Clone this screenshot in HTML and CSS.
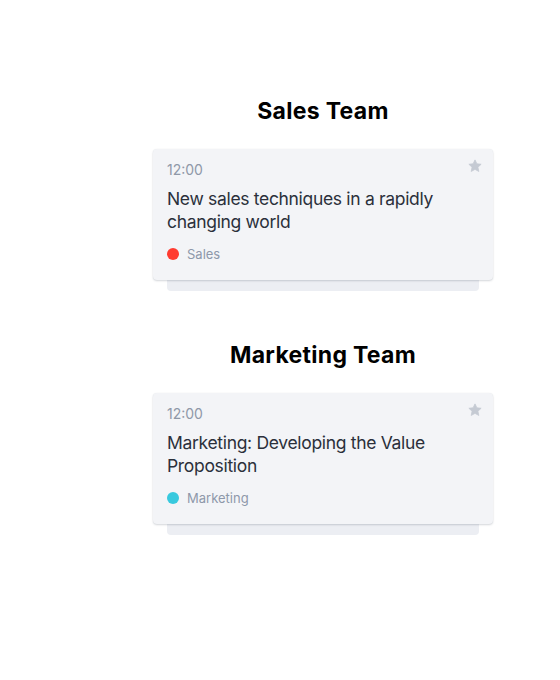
FILE: index.html
```html
<!DOCTYPE html>
<html lang="en">
<head>
<meta charset="utf-8">
<title>Teams</title>
<link rel="stylesheet" href="styles.css">
</head>
<body>
<main class="page">
  <section class="team">
    <h2 class="team-title">Sales Team</h2>
    <article class="card">
      <div class="card-top">
        <span class="time">12:00</span>
        <svg class="star" viewBox="0 0 24 24" width="16" height="16" aria-hidden="true"><path d="M12 2.8l2.8 5.9 6.4.7-4.8 4.4 1.3 6.4L12 17l-5.7 3.2 1.3-6.4-4.8-4.4 6.4-.7z"/></svg>
      </div>
      <h3 class="card-title">New sales techniques in a rapidly changing world</h3>
      <div class="tag"><span class="dot dot-red"></span><span class="tag-label">Sales</span></div>
    </article>
    <div class="card-stack"></div>
  </section>
  <section class="team">
    <h2 class="team-title">Marketing Team</h2>
    <article class="card">
      <div class="card-top">
        <span class="time">12:00</span>
        <svg class="star" viewBox="0 0 24 24" width="16" height="16" aria-hidden="true"><path d="M12 2.8l2.8 5.9 6.4.7-4.8 4.4 1.3 6.4L12 17l-5.7 3.2 1.3-6.4-4.8-4.4 6.4-.7z"/></svg>
      </div>
      <h3 class="card-title">Marketing: Developing the Value Proposition</h3>
      <div class="tag"><span class="dot dot-cyan"></span><span class="tag-label">Marketing</span></div>
    </article>
    <div class="card-stack"></div>
  </section>
</main>
</body>
</html>
```
FILE: styles.css
```css
* { box-sizing: border-box; }
html, body { margin: 0; padding: 0; background: #ffffff; }
body { font-family: Inter, "Noto Sans", sans-serif; }

.page {
  padding: 97px 0 0 153px;
  width: 493px;
  display: flex;
  flex-direction: column;
  gap: 50px;
}

.team { display: flex; flex-direction: column; }

.team-title {
  margin: 0 0 24px;
  font-size: 23px;
  line-height: 28px;
  font-weight: 700;
  color: #000;
  text-align: center;
  letter-spacing: 0.3px;
}

.card {
  background: #f3f4f7;
  border-radius: 4px;
  padding: 11px 10px 16px 14px;
  box-shadow: 0 1px 2px rgba(30, 40, 60, 0.18), 0 0 1px rgba(30, 40, 60, 0.08);
  position: relative;
  z-index: 1;
}

.card-top {
  display: flex;
  justify-content: space-between;
  align-items: flex-start;
}

.time {
  font-size: 14px;
  line-height: 20px;
  color: #8f98a8;
}

.star { fill: #c5cad3; margin-top: -2px; stroke: #c5cad3; stroke-width: 1.2; stroke-linejoin: round; }

.card-title {
  margin: 6.5px 0 0;
  font-size: 17.5px;
  line-height: 23px;
  font-weight: 400;
  color: #2b303b;
  letter-spacing: -0.32px;
}

.tag {
  margin-top: 11.5px;
  display: flex;
  align-items: center;
  gap: 8px;
  height: 20px;
}

.dot { width: 12px; height: 12px; border-radius: 50%; }
.dot-red { background: #ff3b30; }
.dot-cyan { background: #38c9de; }

.tag-label { font-size: 13px; line-height: 20px; color: #8e98aa; }

.card-stack {
  height: 11px;
  margin: 0 14px;
  background: #eceef3;
  border-radius: 0 0 4px 4px;
}
```
